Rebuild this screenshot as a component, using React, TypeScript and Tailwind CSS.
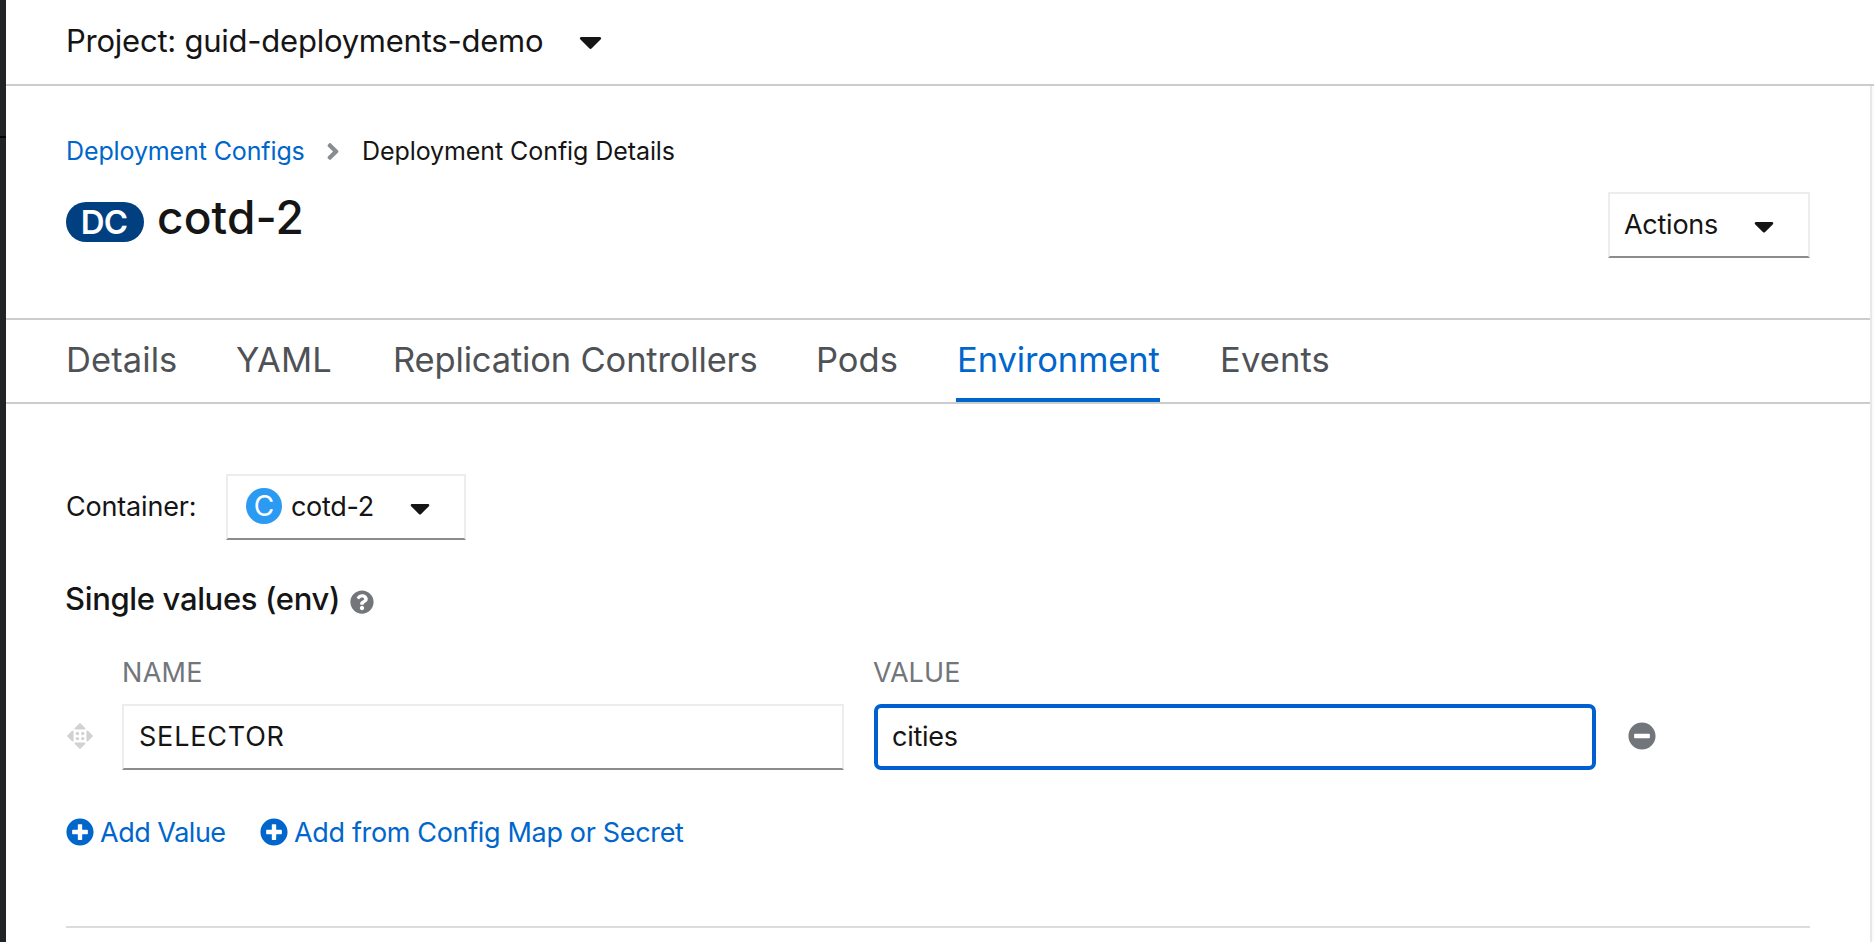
import type { ReactNode } from "react";
import {
  FaAngleRight,
  FaCaretDown,
  FaMinusCircle,
  FaPlusCircle,
  FaQuestionCircle,
} from "react-icons/fa";

function DragHandle() {
  return (
    <svg
      viewBox="0 0 26 26"
      className="mt-[19px] ml-px h-[26px] w-[26px] shrink-0 text-[#d2d2d2]"
      fill="currentColor"
      stroke="currentColor"
      strokeLinejoin="round"
    >
      <path strokeWidth="1.8" d="M13 1.2 17.6 5.7H8.4z" />
      <path strokeWidth="1.8" d="M13 24.8 8.4 20.3h9.2z" />
      <path strokeWidth="1.8" d="M1.2 13 5.7 8.4v9.2z" />
      <path strokeWidth="1.8" d="M24.8 13 20.3 17.6V8.4z" />
      <g stroke="none">
        <circle cx="10.4" cy="10.5" r="1.7" />
        <circle cx="15.7" cy="10.5" r="1.7" />
        <circle cx="10.4" cy="15.6" r="1.7" />
        <circle cx="15.7" cy="15.6" r="1.7" />
      </g>
    </svg>
  );
}

const boxBorder =
  "border-2 border-t-[#ededed] border-r-[#ededed] border-l-[#ededed] border-b-[#8a8d90]";

const tabs = [
  { label: "Details", box: "w-[110px]", tracking: "tracking-[0.09px]" },
  { label: "YAML", box: "w-[96px]", tracking: "tracking-[0.15px]" },
  { label: "Replication Controllers", box: "w-[364px]", tracking: "ml-px tracking-[-0.16px]" },
  { label: "Pods", box: "w-[80px]", tracking: "tracking-[0.01px]" },
  { label: "Environment", box: "w-[204px]", tracking: "ml-px tracking-[-0.1px]", active: true },
  { label: "Events", box: "w-[110px]", tracking: "tracking-[0.14px]" },
];

function AddLink({ children, className }: { children: ReactNode; className: string }) {
  return (
    <a className="flex items-center gap-[6px] text-[#0066cc]">
      <FaPlusCircle className="h-[28px] w-[28px]" />
      <span className={`pt-[2px] ${className}`}>{children}</span>
    </a>
  );
}

export default function App() {
  return (
    <div className="flex h-[942px] w-full overflow-hidden bg-white font-['Inter','Liberation_Sans',sans-serif] text-[27px] leading-[30px] whitespace-nowrap text-[#151515]">
      <aside className="flex w-[6px] shrink-0 flex-col bg-[#212427]">
        <div className="mt-[136px] h-[2px] bg-[#030303]" />
      </aside>

      <div className="flex min-w-0 flex-1 flex-col">
        <header className="flex h-[86px] shrink-0 items-start border-b-2 border-[#cccccc] pl-[60px]">
          <span className="mt-[21px] text-[31px] leading-[40px] tracking-[-0.24px]">
            Project: guid-deployments-demo
          </span>
          <FaCaretDown className="mt-[23px] ml-[36px] h-[37px] w-[23px]" />
        </header>

        <div className="flex min-h-0 flex-1">
          <main className="flex min-w-0 flex-1 flex-col bg-white">
            <nav className="mt-[50px] flex h-[30px] items-center pl-[60px] text-[25px]">
              <a className="w-[260px] tracking-[-0.12px] text-[#0066cc]">Deployment Configs</a>
              <FaAngleRight className="h-[27px] w-[14px] text-[#8a8d90]" />
              <span className="ml-[22px] tracking-[-0.08px]">Deployment Config Details</span>
            </nav>

            <div className="mt-[26px] flex h-[66px] items-start pr-[60px] pl-[60px]">
              <span className="mt-[10px] flex h-[40px] w-[78px] items-center justify-center rounded-full bg-[#004080] pr-[2px] text-[33px] leading-[40px] font-semibold tracking-[-0.8px] text-white">
                DC
              </span>
              <h1 className="ml-[13px] text-[46px] leading-[50px] font-medium tracking-[0.14px]">
                cotd-2
              </h1>
              <button
                className={`${boxBorder} ml-auto flex h-[66px] w-[202px] items-center pl-[14px]`}
              >
                <span className="w-[130px] pb-px text-left tracking-[-0.26px]">Actions</span>
                <FaCaretDown className="mt-[2px] h-[32px] w-[20px]" />
              </button>
            </div>

            <div className="mt-[60px] flex h-[86px] gap-[60px] border-y-2 border-[#cccccc] pl-[60px] text-[34.5px] leading-[40px] text-[#4f5255]">
              {tabs.map((tab) => (
                <a
                  key={tab.label}
                  className={`${tab.box} h-[82px] pt-[20px] ${
                    tab.active ? "border-b-4 border-[#0066cc] text-[#0066cc]" : ""
                  }`}
                >
                  <span className={tab.tracking}>{tab.label}</span>
                </a>
              ))}
            </div>

            <div className="mt-[70px] flex h-[66px] items-center pl-[60px]">
              <span className="w-[160px] pb-px tracking-[-0.19px]">Container:</span>
              <button className={`${boxBorder} flex h-[66px] w-[240px] items-center pl-[18px]`}>
                <span className="mb-[2px] flex h-[36px] w-[36px] items-center justify-center rounded-full bg-[#2b9af3] text-[28px] leading-[36px] text-white">
                  C
                </span>
                <span className="ml-[9px] w-[119px] pb-px text-left tracking-[-0.3px]">
                  cotd-2
                </span>
                <FaCaretDown className="mt-[2px] h-[32px] w-[20px]" />
              </button>
            </div>

            <div className="mt-[39px] flex h-[40px] items-center pl-[59px]">
              <h2 className="text-[31px] leading-[40px] font-medium tracking-[-0.34px]">
                Single values (env)
              </h2>
              <FaQuestionCircle className="mt-[6px] ml-[10px] h-[24px] w-[24px] text-[#72767b]" />
            </div>

            <div className="mt-[39px] flex pl-[116px] text-[#72767b]">
              <span className="w-[751px] tracking-[0.3px]">NAME</span>
              <span className="tracking-[0.1px]">VALUE</span>
            </div>

            <div className="mt-[16px] flex h-[66px] pl-[60px]">
              <DragHandle />
              <div
                className={`${boxBorder} ml-[29px] flex w-[722px] items-center pb-px pl-[15px]`}
              >
                <span className="tracking-[0.79px]">SELECTOR</span>
              </div>
              <div className="ml-[30px] flex w-[722px] items-center rounded-[7px] border-4 border-[#0060d0] pb-px pl-[14px]">
                <span className="tracking-[-0.25px]">cities</span>
              </div>
              <FaMinusCircle className="mt-[18px] ml-[32px] h-[28px] w-[28px] text-[#72767b]" />
            </div>

            <div className="mt-[47px] flex h-[30px] gap-[34px] pl-[60px]">
              <AddLink className="w-[126px] tracking-[-0.48px]">Add Value</AddLink>
              <AddLink className="tracking-[-0.34px]">Add from Config Map or Secret</AddLink>
            </div>

            <hr className="mx-[60px] mt-[79px] border-t-2 border-[#dcdcdc]" />
          </main>
          <div className="w-[4px] shrink-0 border-l-2 border-[#e8e8e8] bg-[#fafafa]" />
        </div>
      </div>
    </div>
  );
}
